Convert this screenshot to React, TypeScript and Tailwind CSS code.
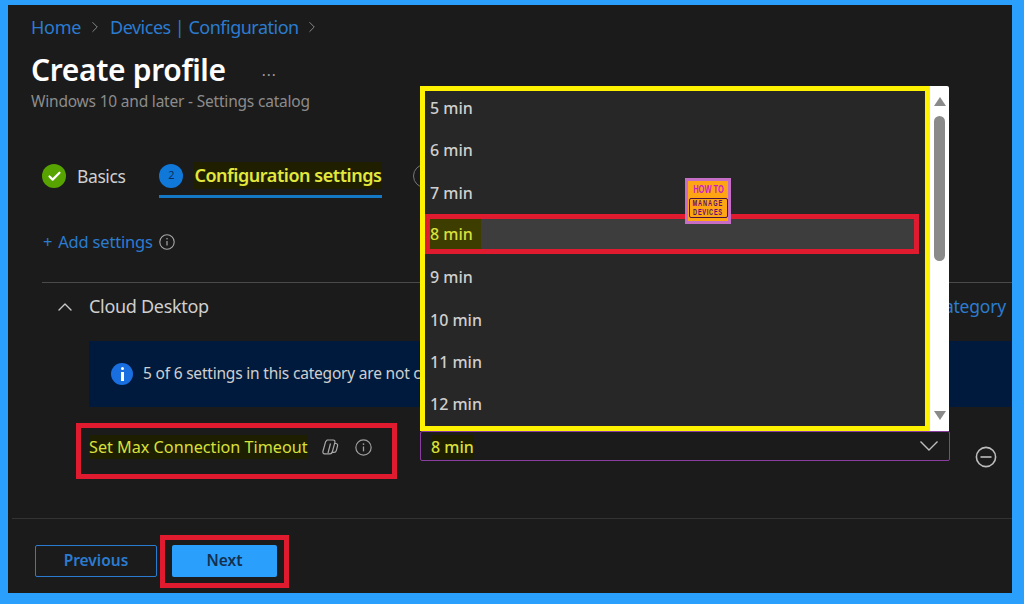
import React from "react";
import { ChevronRight, ChevronUp, Check } from "lucide-react";

function Info({ size = 16, className = "" }: { size?: number; className?: string }) {
  return (
    <svg width={size} height={size} viewBox="0 0 16 16" fill="none" className={className}>
      <circle cx="8" cy="8" r="7.2" stroke="currentColor" strokeWidth="1.1" />
      <path d="M8 7v4.6" stroke="currentColor" strokeWidth="1.2" />
      <circle cx="8" cy="4.8" r="0.8" fill="currentColor" />
    </svg>
  );
}

const options = ["5 min", "6 min", "7 min", "8 min", "9 min", "10 min", "11 min", "12 min"];

export default function App() {
  return (
    <div className="w-[1024px] h-[604px] bg-[#2a9ffc] pt-[5px] pl-[8px] pr-[12px] pb-[11px] overflow-hidden font-['Noto_Sans','Open_Sans',sans-serif]">
      <div className="relative w-full h-full bg-[#1b1b1b] flex flex-col overflow-hidden">
        {/* breadcrumb */}
        <div className="mt-[10px] ml-[23px] h-6 flex items-center text-[18px] text-[#2b7cd0]">
          <span className="tracking-[-0.3px]">Home</span>
          <ChevronRight size={18} strokeWidth={1.3} className="ml-[5px] mr-[6px] text-[#8a8a8a]" />
          <span className="tracking-[-0.5px]">Devices | Configuration</span>
          <ChevronRight size={18} strokeWidth={1.3} className="ml-[4px] text-[#8a8a8a]" />
        </div>
        {/* title */}
        <div className="mt-[13px] ml-[23px] h-9 flex items-center">
          <h1 className="text-[30px] leading-9 font-semibold text-white tracking-[-0.35px]">Create profile</h1>
          <span className="ml-[36px] text-[15px] leading-none text-[#a0a0a0] tracking-[1px]">...</span>
        </div>
        <div className="mt-[4px] ml-[23px] h-5 flex items-center text-[15.5px] text-[#8c8c8c] tracking-[-0.2px]">
          Windows 10 and later - Settings catalog
        </div>
        {/* stepper */}
        <div className="mt-[44px] ml-[34px] h-[43px] flex items-start">
          <div className="h-[40px] flex items-center">
            <span className="w-6 h-6 rounded-full bg-[#57a300] flex items-center justify-center">
              <Check size={15} strokeWidth={3.5} className="text-white" />
            </span>
            <span className="ml-[11px] text-[17.5px] text-[#cfcfcf] tracking-[-0.4px]">Basics</span>
          </div>
          <div className="ml-[34px] h-[42px] w-[223px] flex items-center border-b-[3px] border-[#1578c4]">
            <span className="w-6 h-6 rounded-full bg-[#1078d8] flex items-center justify-center text-[11px] text-[#0b2f5c]">2</span>
            <span className="ml-[12px] -translate-x-px text-[18px] font-semibold whitespace-nowrap text-[#e3e83c] bg-[#1f1f00] tracking-[-0.45px]">Configuration settings</span>
          </div>
          <span className="ml-[31px] mt-[8px] w-6 h-6 rounded-full border border-[#777]" />
        </div>
        {/* add settings */}
        <div className="mt-[31px] ml-[35px] h-6 flex items-center text-[16.5px] text-[#2b7cd0] tracking-[-0.2px]">
          <span>+</span>
          <span className="ml-[6px]">Add settings</span>
          <Info size={16} className="ml-[6px] text-[#a8a8a8]" />
        </div>
        <div className="mt-[28px] ml-[34px] h-px bg-[#4a4a4a]" />
        {/* category */}
        <div className="h-[47px] flex items-center">
          <ChevronUp size={24} strokeWidth={1.4} className="ml-[45px] text-[#c8c8c8]" />
          <span className="ml-[12px] text-[18px] text-[#cfcfcf] tracking-[-0.3px]">Cloud Desktop</span>
          <span className="ml-auto mr-[6px] text-[17.5px] text-[#2b7cd0] tracking-[-0.2px]">Remove category</span>
        </div>
        {/* banner */}
        <div className="mt-[11px] ml-[81px] h-[66px] bg-[#001a3d] flex items-center pl-[22px]">
          <span className="w-[22px] h-[22px] rounded-full bg-[#1a6fe0] flex flex-col items-center justify-center gap-[2px]">
            <span className="w-[3px] h-[3px] rounded-full bg-white" />
            <span className="w-[3px] h-[9px] bg-white" />
          </span>
          <span className="ml-[10px] text-[15.5px] text-[#cfcfcf] tracking-[-0.2px] whitespace-nowrap">5 of 6 settings in this category are not c</span>
        </div>
        {/* setting row */}
        <div className="mt-[16px] h-[56px] flex items-start">
          <div className="ml-[68px] w-[321px] h-[56px] border-[5px] border-[#e01b2f] flex items-start">
            <div className="mt-[7px] ml-[8px] h-6 flex items-center">
              <span className="text-[16.2px] leading-6 whitespace-nowrap text-[#d9e03c] bg-[#1e1e00]">Set Max Connection Timeout</span>
              <svg width="18" height="18" viewBox="0 0 18 18" fill="none" className="ml-[13px] text-[#a8a8a8]">
                <path d="M6.2 2h6a1.8 1.8 0 0 1 1.7 2.3L11.3 14a2.4 2.4 0 0 1-2.3 1.8H3.6a1.8 1.8 0 0 1-1.7-2.3L4 6a5 5 0 0 1 2.2-4Z" stroke="currentColor" strokeWidth="1.2" />
                <path d="M13.6 5.5h1.2A1.8 1.8 0 0 1 16.5 8l-1.2 4.6a2.4 2.4 0 0 1-2.3 1.8H10.5" stroke="currentColor" strokeWidth="1.2" />
                <path d="M9.5 5.5 7 15" stroke="currentColor" strokeWidth="1.2" />
              </svg>
              <Info size={17} className="ml-[16px] text-[#a0a0a0]" />
            </div>
          </div>
          <div className="ml-[23px] mt-[8px] w-[530px] h-[30px] border border-[#8a3f9f] rounded-[2px] flex items-center pl-[10px] pr-[10px]">
            <span className="mt-[1px] text-[16px] leading-6 font-medium text-[#d9e03c] bg-[#1e1e00]">8 min</span>
            <svg width="20" height="12" viewBox="0 0 20 12" fill="none" className="ml-auto text-[#c0c0c0]">
              <path d="M1.5 1.5 10 10l8.5-8.5" stroke="currentColor" strokeWidth="1.4" />
            </svg>
          </div>
          <svg width="22" height="22" viewBox="0 0 22 22" fill="none" className="ml-[25px] mt-[23px] text-[#bdbdbd]">
            <circle cx="11" cy="11" r="9.6" stroke="currentColor" strokeWidth="1.6" />
            <path d="M5.5 11h11" stroke="currentColor" strokeWidth="1.6" />
          </svg>
        </div>
        <div className="mt-[39px] ml-[4px] h-px bg-[#333333]" />
        {/* footer */}
        <div className="ml-[27px] flex items-start">
          <button className="mt-[26px] w-[122px] h-[32px] rounded-[2px] border border-[#2b7cd0] text-[15.5px] font-semibold text-[#2b7cd0]">Previous</button>
          <div className="ml-[3px] mt-[16px] border-[5px] border-[#e01b2f] w-[129px] h-[53px] pt-[5px] pl-[7px]">
            <button className="w-[105px] h-[32px] rounded-[2px] bg-[#2a9ffc] text-[15.5px] font-semibold text-[#14304f]">Next</button>
          </div>
        </div>

        {/* open dropdown */}
        <div className="absolute left-[412px] top-[81px] w-[529px] h-[345px] flex">
          <div className="w-[510px] h-full bg-[#272727] border-[5px] border-[#fff200] flex flex-col overflow-hidden">
            <div className="-mt-[4px] flex flex-col">
              {options.map((o) =>
                o === "8 min" ? (
                  <div key={o} className="h-[40px] mb-[2.3px] shrink-0 bg-[#3d3d3d] border-[5px] border-[#e01b2f] mr-[6px] flex items-center">
                    <span className="h-full pr-[8px] flex items-center bg-[#3d3d00] text-[16px] font-medium text-[#d9e03c]">{o}</span>
                  </div>
                ) : (
                  <div key={o} className="h-[42.3px] shrink-0 flex items-center pl-[5px] text-[16px] font-medium text-[#cfcfcf]">{o}</div>
                )
              )}
            </div>
          </div>
          <div className="w-[19px] h-full bg-white rounded-tr-[2px] flex flex-col items-center pt-[11px]">
            <span className="w-0 h-0 border-x-[6.5px] border-x-transparent border-b-[9px] border-b-[#8a8a8a]" />
            <span className="mt-[10px] w-[11px] h-[145px] rounded-full bg-[#8a8a8a]" />
            <span className="mt-auto mb-[11px] w-0 h-0 border-x-[6.5px] border-x-transparent border-t-[9px] border-t-[#8a8a8a]" />
          </div>
        </div>

        {/* watermark logo */}
        <div className="absolute left-[677px] top-[173px] w-[46px] h-[46px] bg-[#ffa514] border-[3px] border-[#c66ec6] flex flex-col items-center font-['Liberation_Sans',sans-serif]">
          <span className="mt-[2px] scale-x-[0.68] text-[11px] leading-[13px] font-bold text-[#c81ec8] whitespace-nowrap">HOW TO</span>
          <div className="mt-[2px] w-[39px] h-[20px] border border-[#4a1040] rounded-[2px] flex flex-col items-center justify-center text-[9px] leading-[9px] font-bold text-[#5a1070] whitespace-nowrap overflow-hidden">
            <span className="scale-x-[0.62] tracking-[1.6px]">MANAGE</span>
            <span className="scale-x-[0.62] tracking-[1.2px]">DEVICES</span>
          </div>
        </div>
      </div>
    </div>
  );
}
